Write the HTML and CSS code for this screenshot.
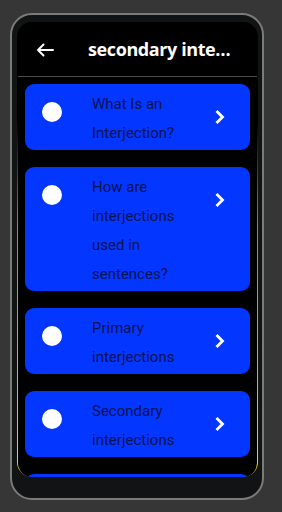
FILE: index.html
```html
<!DOCTYPE html>
<html lang="en">
<head>
    <meta charset="UTF-8">
    <meta name="viewport" content="width=device-width, initial-scale=1.0">
    <title>Secondary interjections</title>
    <link rel="stylesheet" href="styles.css">
</head>
<body>
    <div class="phone">
        <div class="screen-edge">
            <div class="screen">
                <div class="app-bar">
                    <svg class="back" width="18" height="14" viewBox="0 0 18 14">
                        <path d="M17 7H2M7.5 1.5L2 7l5.5 5.5" fill="none" stroke="#fff" stroke-width="2" stroke-linecap="round" stroke-linejoin="round"/>
                    </svg>
                    <h1 class="title">secondary interjections</h1>
                </div>

                <div class="lessons">
                    <div class="lesson">
                        <span class="dot"></span>
                        <span class="lesson-text">What Is an Interjection?</span>
                        <svg class="chevron" width="11" height="16" viewBox="0 0 11 16"><path d="M2.5 2l6 6-6 6" fill="none" stroke="#fff" stroke-width="2.8"/></svg>
                    </div>
                    <div class="lesson">
                        <span class="dot"></span>
                        <span class="lesson-text">How are interjections used in sentences?</span>
                        <svg class="chevron" width="11" height="16" viewBox="0 0 11 16"><path d="M2.5 2l6 6-6 6" fill="none" stroke="#fff" stroke-width="2.8"/></svg>
                    </div>
                    <div class="lesson">
                        <span class="dot"></span>
                        <span class="lesson-text">Primary interjections</span>
                        <svg class="chevron" width="11" height="16" viewBox="0 0 11 16"><path d="M2.5 2l6 6-6 6" fill="none" stroke="#fff" stroke-width="2.8"/></svg>
                    </div>
                    <div class="lesson">
                        <span class="dot"></span>
                        <span class="lesson-text">Secondary interjections</span>
                        <svg class="chevron" width="11" height="16" viewBox="0 0 11 16"><path d="M2.5 2l6 6-6 6" fill="none" stroke="#fff" stroke-width="2.8"/></svg>
                    </div>
                    <div class="lesson">
                        <span class="dot"></span>
                        <span class="lesson-text">Examples of interjections</span>
                        <svg class="chevron" width="11" height="16" viewBox="0 0 11 16"><path d="M2.5 2l6 6-6 6" fill="none" stroke="#fff" stroke-width="2.8"/></svg>
                    </div>
                </div>
            </div>
        </div>
    </div>
</body>
</html>
```

FILE: styles.css
```css
body {
    margin: 0;
    padding: 13px 0 0 10px;
    background: #363636;
    font-family: Roboto, "Liberation Sans", sans-serif;
    height: 512px;
    box-sizing: border-box;
    overflow: hidden;
}

.phone {
    width: 254px;
    height: 487px;
    box-sizing: border-box;
    border: 2px solid #7a7c78;
    border-radius: 22px;
    background: #121314;
    padding: 7px 4px 21px 5px;
}

.screen-edge {
    height: 100%;
    border-radius: 15px;
    padding: 0 1px;
    box-sizing: border-box;
    background: linear-gradient(to bottom, #000 22%, #9a931c 45%, #e2da26 100%);
}

.screen {
    height: 100%;
    border-radius: 14px;
    background: #000;
    overflow: hidden;
}

.app-bar {
    height: 54px;
    display: flex;
    align-items: center;
    border-bottom: 1px solid #4a4a4a;
    padding: 0 0 0 18px;
}

.back {
    flex-shrink: 0;
    margin-top: 1px;
}

.title {
    margin: 0 0 0 34px;
    width: 146px;
    color: #fff;
    font-family: "Open Sans", Roboto, sans-serif;
    font-size: 18px;
    font-weight: bold;
    white-space: nowrap;
    overflow: hidden;
    text-overflow: ellipsis;
    letter-spacing: -0.4px;
}

.lessons {
    display: flex;
    flex-direction: column;
    gap: 17px;
    padding: 7px 7px 0 7px;
}

.lesson {
    display: flex;
    align-items: flex-start;
    background: #0336ff;
    border-radius: 9px;
    padding: 6px 25px 2px 17px;
}

.dot {
    width: 20px;
    height: 20px;
    border-radius: 50%;
    background: #fff;
    margin-top: 12px;
    flex-shrink: 0;
}

.lesson-text {
    margin-left: 30px;
    width: 108px;
    font-size: 15px;
    font-weight: 400;
    line-height: 29px;
    color: #0b1350;
}

.chevron {
    margin: 19px 0 0 auto;
    flex-shrink: 0;
}
```
